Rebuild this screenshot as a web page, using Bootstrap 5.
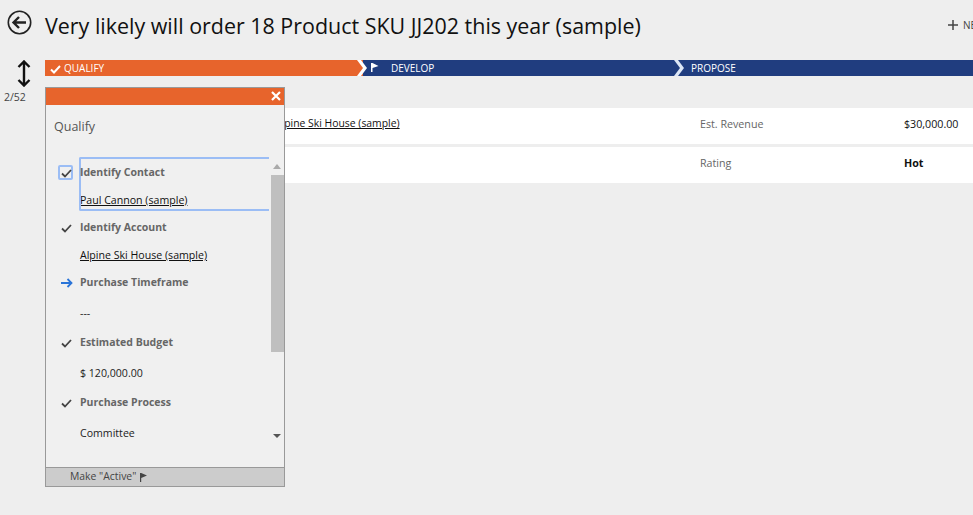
<!DOCTYPE html>
<html lang="en">
<head>
    <meta charset="UTF-8">
    <title>Opportunity</title>
    <link href="https://cdn.jsdelivr.net/npm/bootstrap@5.3.3/dist/css/bootstrap.min.css" rel="stylesheet">
    <style>
        html, body { height: 515px; overflow: hidden; }
        body { background: #eee; font-family: "Open Sans", "Noto Sans", sans-serif; font-size: 10px; color: #222; position: relative; }
        .top-head { height: 60px; padding: 10px 0 0 7px; }
        .back-btn { width: 25px; height: 25px; margin-right: 13px; }
        .opp-title { font-size: 21.45px; line-height: 31px; margin: 0; color: #111; font-weight: 400; white-space: nowrap; }
        .new-cmd { width: 25px; overflow: hidden; white-space: nowrap; font-size: 10px; color: #444; line-height: 30px; flex: none; margin-left: auto; }
        .new-cmd svg { margin-right: 5px; vertical-align: -1px; }
        .stage-row { height: 16px; }
        .sort-col { width: 45px; flex: none; position: relative; }
        .sort-arrows { position: absolute; left: 16px; top: 0; }
        .sort-count { position: absolute; left: 4px; top: 31px; color: #444; line-height: 12px; font-size: 10.5px; }
        .stage-bar { flex: 1; display: flex; height: 16px; }
        .stage { position: relative; color: #fff; font-size: 10px; line-height: 16px; height: 16px; }
        .stage-qualify { width: 318px; background: #e7642c; padding-left: 5px; }
        .stage-qualify .tick-ico { margin-right: 3px; }
        .stage-develop { width: 317px; background: #203d7f; padding-left: 28px; }
        .stage-propose { flex: 1; background: #203d7f; padding-left: 11px; }
        .stage-sep { position: absolute; right: -5px; top: 0; z-index: 2; }
        .flag-ico { position: absolute; left: 8px; top: 3px; }
        .detail-rows { margin: 32px 0 0 45px; }
        .detail-row { height: 36px; background: #fff; margin-bottom: 3px; display: flex; align-items: center; font-size: 10.7px; padding-bottom: 4px; }
        .detail-main { width: 226px; padding-left: 230px; flex: none; box-sizing: content-box; white-space: nowrap; font-size: 10.4px; }
        .detail-main a { color: #111; }
        .detail-label { margin-left: 199px; width: 204px; color: #666; flex: none; }
        .detail-value { color: #111; }
        .qualify-pop { position: absolute; left: 45px; top: 87px; width: 240px; height: 400px; border: 1px solid #999; background: #f0f0f0; display: flex; flex-direction: column; z-index: 5; }
        .pop-head { height: 17px; background: #e7642c; flex: none; }
        .pop-close { margin-left: auto; margin-right: 3px; margin-top: 3px; display: block; }
        .pop-body { flex: 1; padding: 13px 0 0 8px; position: relative; overflow: hidden; }
        .pop-title { font-size: 12.5px; color: #555; line-height: 18px; margin-bottom: 23px; }
        .step { display: flex; align-items: center; height: 28px; padding-bottom: 1px; position: relative; }
        .step-ico { width: 26px; flex: none; padding-left: 7px; }
        .step-name { font-weight: 700; color: #666; font-size: 10.5px; white-space: nowrap; }
        .step-val { padding-left: 26px; height: 27px; line-height: 27px; color: #222; font-size: 10.6px; white-space: nowrap; }
        .step-val a { color: #111; }
        .val-gap { margin-top: 3px; }
        .step-gap { margin-top: 2px; }
        .focus-box { position: absolute; left: 25px; top: -2px; width: 190px; height: 54px; border: 2px solid #9bbdf5; border-right: 0; border-radius: 2px 0 0 2px; pointer-events: none; }
        .check-box { position: absolute; left: 4px; top: 6px; width: 15px; height: 15px; border: 2px solid #9bbdf5; border-radius: 2px; }
        .scroll-rail { position: absolute; right: 0; top: 53px; width: 13px; height: 283px; background: #f0f0f0; }
        .scroll-thumb { position: absolute; left: 0; top: 17px; width: 13px; height: 177px; background: #bfbfbf; }
        .scroll-up { position: absolute; left: 2px; top: 6px; border: 4px solid transparent; border-top: 0; border-bottom: 5px solid #aaa; }
        .scroll-down { position: absolute; left: 2px; top: 276px; border: 4px solid transparent; border-bottom: 0; border-top: 4px solid #555; }
        .pop-foot { height: 19px; background: #ccc; border-top: 1px solid #999; flex: none; padding-left: 24px; line-height: 17px; color: #444; font-size: 10.4px; }
        .pop-foot svg { margin-left: 1px; }
    </style>
</head>
<body>

<header class="top-head d-flex align-items-start">
    <svg class="back-btn flex-shrink-0" viewBox="0 0 25 25"><circle cx="12.5" cy="12.5" r="11.2" fill="none" stroke="#222" stroke-width="1.6"/><path d="M19 12.5H7M12 7l-5.5 5.5L12 18" fill="none" stroke="#222" stroke-width="2.4"/></svg>
    <h1 class="opp-title">Very likely will order 18 Product SKU JJ202 this year (sample)</h1>
    <div class="new-cmd"><svg width="10" height="10" viewBox="0 0 10 10"><path d="M5 0v10M0 5h10" stroke="#444" stroke-width="1.5"/></svg>NEW</div>
</header>

<section class="stage-row d-flex">
    <div class="sort-col">
        <svg class="sort-arrows" width="16" height="27" viewBox="0 0 16 27"><path d="M8 1v25M2.5 7 8 1.5 13.5 7M2.5 20 8 25.5 13.5 20" fill="none" stroke="#111" stroke-width="2.4"/></svg>
        <span class="sort-count">2/52</span>
    </div>
    <div class="stage-bar">
        <div class="stage stage-qualify">
            <svg class="tick-ico" width="11" height="9" viewBox="0 0 11 9"><path d="M1 4.5 4 7.5 10 1" fill="none" stroke="#fff" stroke-width="2"/></svg>QUALIFY
            <svg class="stage-sep" width="11" height="16" viewBox="0 0 11 16"><path d="M0 0h4l6 8-6 8H0l6-8z" fill="#fff"/></svg>
        </div>
        <div class="stage stage-develop">
            <svg class="flag-ico" width="8" height="9" viewBox="0 0 8 9"><path d="M0 0h1.5v9H0zM1.5 0 7.5 3 1.5 5z" fill="#fff"/></svg>DEVELOP
            <svg class="stage-sep" width="11" height="16" viewBox="0 0 11 16"><path d="M0 0h4l6 8-6 8H0l6-8z" fill="#dce6f5"/></svg>
        </div>
        <div class="stage stage-propose">PROPOSE</div>
    </div>
</section>

<section class="detail-rows">
    <div class="detail-row">
        <div class="detail-main"><a href="#">Alpine Ski House (sample)</a></div>
        <div class="detail-label">Est. Revenue</div>
        <div class="detail-value">$30,000.00</div>
    </div>
    <div class="detail-row">
        <div class="detail-main"></div>
        <div class="detail-label">Rating</div>
        <div class="detail-value fw-bold">Hot</div>
    </div>
</section>

<aside class="qualify-pop">
    <div class="pop-head">
        <svg class="pop-close" width="10" height="10" viewBox="0 0 10 10"><path d="M1 1l8 8M9 1 1 9" stroke="#fff" stroke-width="2.2"/></svg>
    </div>
    <div class="pop-body">
        <div class="pop-title">Qualify</div>
        <div class="position-relative">
            <span class="check-box"></span>
            <span class="focus-box"></span>
            <div class="step">
                <span class="step-ico"><svg width="11" height="9" viewBox="0 0 11 9"><path d="M1 4.5 4 7.5 10 1" fill="none" stroke="#444" stroke-width="1.8"/></svg></span>
                <span class="step-name">Identify Contact</span>
            </div>
            <div class="step-val"><a href="#">Paul Cannon (sample)</a></div>
            <div class="step">
                <span class="step-ico"><svg width="11" height="9" viewBox="0 0 11 9"><path d="M1 4.5 4 7.5 10 1" fill="none" stroke="#444" stroke-width="1.8"/></svg></span>
                <span class="step-name">Identify Account</span>
            </div>
            <div class="step-val"><a href="#">Alpine Ski House (sample)</a></div>
            <div class="step">
                <span class="step-ico"><svg width="12" height="10" viewBox="0 0 12 10"><path d="M0 5h10M6.5 1 10.5 5 6.5 9" fill="none" stroke="#2a74d8" stroke-width="1.8"/></svg></span>
                <span class="step-name">Purchase Timeframe</span>
            </div>
            <div class="step-val val-gap">---</div>
            <div class="step step-gap">
                <span class="step-ico"><svg width="11" height="9" viewBox="0 0 11 9"><path d="M1 4.5 4 7.5 10 1" fill="none" stroke="#444" stroke-width="1.8"/></svg></span>
                <span class="step-name">Estimated Budget</span>
            </div>
            <div class="step-val val-gap">$ 120,000.00</div>
            <div class="step step-gap">
                <span class="step-ico"><svg width="11" height="9" viewBox="0 0 11 9"><path d="M1 4.5 4 7.5 10 1" fill="none" stroke="#444" stroke-width="1.8"/></svg></span>
                <span class="step-name">Purchase Process</span>
            </div>
            <div class="step-val val-gap">Committee</div>
        </div>
        <div class="scroll-rail">
            <span class="scroll-up"></span>
            <span class="scroll-thumb"></span>
            <span class="scroll-down"></span>
        </div>
    </div>
    <div class="pop-foot">Make "Active" <svg width="8" height="9" viewBox="0 0 8 9"><path d="M0 0h1.2v9H0zM1.2 0 7 2.5 1.2 5z" fill="#444"/></svg></div>
</aside>

<script src="https://cdn.jsdelivr.net/npm/bootstrap@5.3.3/dist/js/bootstrap.bundle.min.js"></script>
</body>
</html>
